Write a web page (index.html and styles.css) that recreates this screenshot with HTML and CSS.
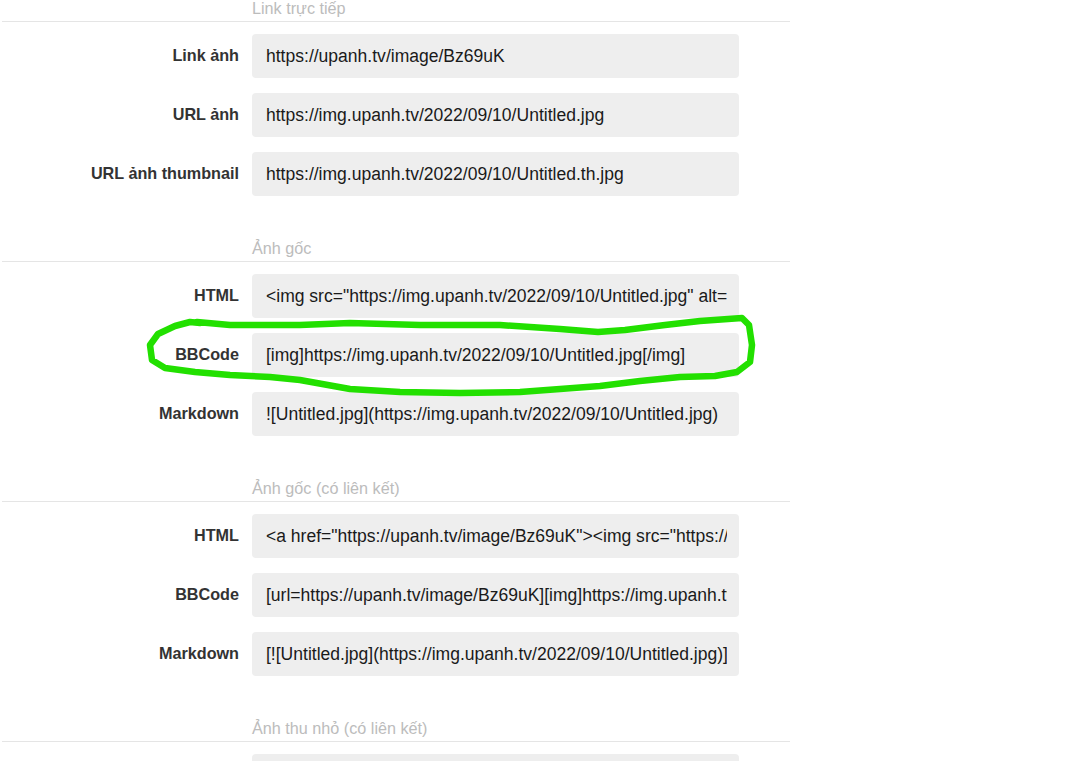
FILE: index.html
```html
<!DOCTYPE html>
<html lang="vi">
<head>
  <meta charset="UTF-8" />
  <meta name="viewport" content="width=device-width, initial-scale=1.0"/>
  <title>Mã nhúng</title>
  <link rel="stylesheet" href="styles.css">
</head>
<body>

  <!-- ======= EMBED CODES ======= -->
  <div class="panel">

    <div class="section-title">Link trực tiếp</div>
    <div class="rows">
      <label>Link ảnh</label>
      <input type="text" readonly value="https://upanh.tv/image/Bz69uK">
      <label>URL ảnh</label>
      <input type="text" readonly value="https://img.upanh.tv/2022/09/10/Untitled.jpg">
      <label>URL ảnh thumbnail</label>
      <input type="text" readonly value="https://img.upanh.tv/2022/09/10/Untitled.th.jpg">
    </div>

    <div class="section-title">Ảnh gốc</div>
    <div class="rows">
      <label>HTML</label>
      <input type="text" readonly value="&lt;img src=&quot;https://img.upanh.tv/2022/09/10/Untitled.jpg&quot; alt=&quot;Untitled.jpg&quot; border=&quot;0&quot;&gt;">
      <label>BBCode</label>
      <input type="text" readonly value="[img]https://img.upanh.tv/2022/09/10/Untitled.jpg[/img]">
      <label>Markdown</label>
      <input type="text" readonly value="![Untitled.jpg](https://img.upanh.tv/2022/09/10/Untitled.jpg)">
    </div>

    <div class="section-title">Ảnh gốc (có liên kết)</div>
    <div class="rows">
      <label>HTML</label>
      <input type="text" readonly value="&lt;a href=&quot;https://upanh.tv/image/Bz69uK&quot;&gt;&lt;img src=&quot;https://img.upanh.tv/2022/09/10/Untitled.jpg&quot; alt=&quot;Untitled.jpg&quot; border=&quot;0&quot;&gt;&lt;/a&gt;">
      <label>BBCode</label>
      <input type="text" readonly value="[url=https://upanh.tv/image/Bz69uK][img]https://img.upanh.tv/2022/09/10/Untitled.jpg[/img][/url]">
      <label>Markdown</label>
      <input type="text" readonly value="[![Untitled.jpg](https://img.upanh.tv/2022/09/10/Untitled.jpg)](https://upanh.tv/image/Bz69uK)">
    </div>

    <div class="section-title">Ảnh thu nhỏ (có liên kết)</div>
    <div class="rows">
      <label></label>
      <input type="text" readonly value="">
    </div>

  </div>

  <!-- ======= GREEN MARKER (annotation) ======= -->
  <svg class="marker" width="1082" height="761" viewBox="0 0 1082 761">
    <path d="M197,322 L230,325 L300,325 L350,323 L420,325 L500,325 L560,329 L598,332 L625,330 L665,325 L700,321 L742,318 L749,325 L752,345 L750,362 L737,372 L715,376 L680,377 L640,381 L600,386 L560,389 L520,392 L460,393 L400,392 L350,389 L300,380 L270,377 L230,375 L195,372 L165,368 L152,360 L150,345 L158,334 L175,326 L190,322 L200,323" />
  </svg>

</body>
</html>
```

FILE: styles.css
```css
body {
  font-family: 'Liberation Sans', Arial, sans-serif;
  margin: 0;
  padding: 0;
  background: #fff;
  overflow: hidden;
}

/* ===== PANEL ===== */
.panel {
  width: 788px;
  margin: -2px 0 0 2px;
}

.section-title {
  padding: 0 0 3px 250px;
  font-size: 16.2px;
  line-height: 20px;
  color: #bcbcbc;
  border-bottom: 1px solid #e5e5e5;
}

.rows {
  display: grid;
  grid-template-columns: 237px 487px;
  column-gap: 13px;
  row-gap: 15px;
  padding: 12px 0 42px;
}

.rows label {
  text-align: right;
  font-weight: bold;
  font-size: 16.2px;
  line-height: 20px;
  padding-top: 11px;
  color: #333;
}

.rows input {
  box-sizing: border-box;
  width: 100%;
  height: 44px;
  margin: 0;
  padding: 0 12px 0 14px;
  border: none;
  border-radius: 4px;
  background: #eee;
  color: #1a1a1a;
  font-family: 'Liberation Sans', Arial, sans-serif;
  font-size: 17.55px;
  outline: none;
}

/* ===== ANNOTATION ===== */
.marker {
  position: absolute;
  top: 0;
  left: 0;
  pointer-events: none;
}

.marker path {
  fill: none;
  stroke: #22e000;
  stroke-width: 6.5;
  stroke-linejoin: round;
  stroke-linecap: round;
}
```
